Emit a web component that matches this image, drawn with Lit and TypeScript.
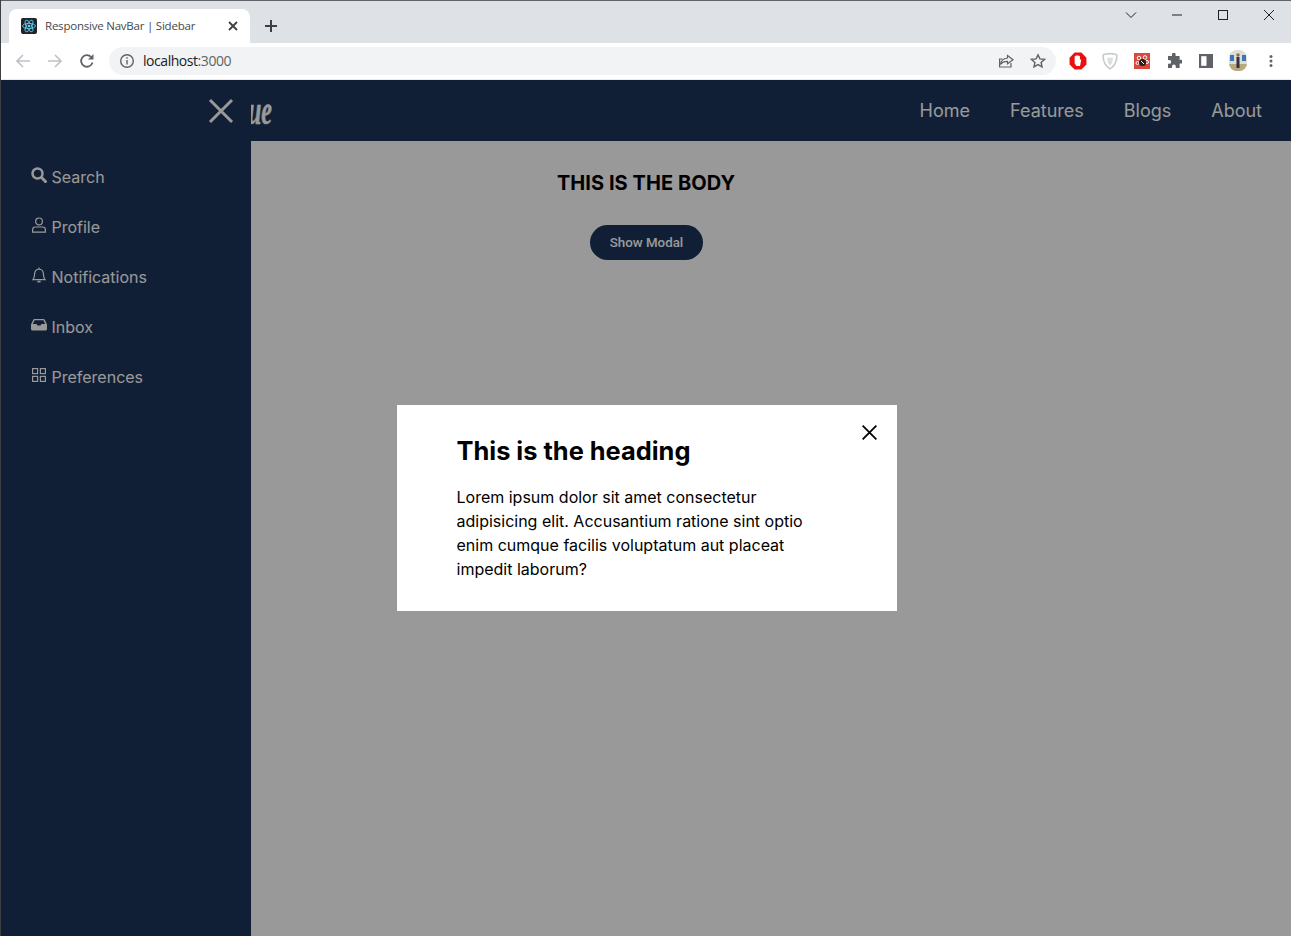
import { LitElement, css, html } from 'lit';
import { customElement } from 'lit/decorators.js';

const sideItems = [
  {
    label: 'Search',
    icon: html`<svg viewBox="0 0 16 16" fill="none" stroke="currentColor"><circle cx="6.500" cy="6.500" r="5" stroke-width="2.500"/><path d="M10.500 10.500l5 5" stroke-width="3"/></svg>`,
  },
  {
    label: 'Profile',
    icon: html`<svg viewBox="0 0 16 16" fill="none" stroke="currentColor" stroke-width="1.200"><circle cx="8" cy="4.400" r="3.400"/><path d="M1.600 15.200v-2.400c0-1.600 1.200-2.800 2.800-2.800h7.200c1.600 0 2.800 1.200 2.800 2.800v2.400z"/></svg>`,
  },
  {
    label: 'Notifications',
    icon: html`<svg viewBox="0 0 16 16" fill="none" stroke="currentColor" stroke-width="1.200"><path d="M8 .6v1.500M2 12.600c1.200-1.400 1.600-3 1.600-5.600C3.600 4 5.600 2.100 8 2.100S12.400 4 12.400 7c0 2.600.4 4.200 1.600 5.600z"/><path d="M6.400 14.600h3.200" stroke-width="1.600"/></svg>`,
  },
  {
    label: 'Inbox',
    icon: html`<svg viewBox="0 0 16 16" fill="currentColor"><path d="M3.600 2h8.800c.5 0 .9.200 1.200.6L16 7.400V12c0 .8-.7 1.500-1.500 1.500h-13C.7 13.500 0 12.800 0 12V7.400l2.400-4.800C2.700 2.200 3.100 2 3.600 2zm0 1.300L1.800 7h3.700l1 1.600h3l1-1.600h3.700l-1.800-3.700z"/></svg>`,
  },
  {
    label: 'Preferences',
    icon: html`<svg viewBox="0 0 16 16" fill="none" stroke="currentColor" stroke-width="1.200"><rect x="1.600" y="1.600" width="5" height="5"/><rect x="9.400" y="1.600" width="5" height="5"/><rect x="1.600" y="9.400" width="5" height="5"/><rect x="9.400" y="9.400" width="5" height="5"/></svg>`,
  },
];

const navLinks = ['Home', 'Features', 'Blogs', 'About'];

@customElement('app-root')
export class AppRoot extends LitElement {
  static get styles() {
    return css`
:host {
  display: block;
  width: 1291px;
  height: 936px;
  overflow: hidden;
  position: relative;
  box-sizing: border-box;
  border-left: 1px solid #3c4043;
  font-family: Inter, sans-serif;
  background: #fff;
}
button {
  font: inherit;
  border: 0;
  background: none;
  padding: 0;
  color: inherit;
}

/* browser chrome */
.tabstrip {
  height: 43px;
  box-sizing: border-box;
  border-top: 1px solid #5f6368;
  background: #dee1e6;
  display: flex;
  align-items: flex-end;
  padding-left: 8px;
}
.tab {
  width: 241px;
  height: 34px;
  box-sizing: border-box;
  background: #fff;
  border-radius: 8px 8px 0 0;
  display: flex;
  align-items: center;
  padding: 0 11px 0 12px;
  font-family: 'Open Sans', sans-serif;
  font-size: 11.5px;
  color: #45494d;
}
.favicon {
  width: 16px;
  height: 16px;
  margin-right: 8px;
  flex: none;
}
.tab-title {
  flex: 1;
  white-space: nowrap;
  letter-spacing: -0.22px;
  margin-top: -2px;
}
.tab-close {
  width: 12px;
  height: 12px;
  color: #3c4043;
}
.new-tab {
  width: 14px;
  height: 14px;
  margin: 0 0 10px 14px;
  color: #3c4043;
}
.winctl {
  margin-left: auto;
  align-self: flex-start;
  display: flex;
  margin-right: -1px;
}
.winctl span {
  width: 46px;
  height: 28px;
  display: flex;
  align-items: center;
  justify-content: center;
  color: #1f2124;
}
.winctl svg {
  width: 12px;
  height: 12px;
}
.toolbar {
  height: 37px;
  box-sizing: border-box;
  border-bottom: 1px solid #e8eaed;
  display: flex;
  align-items: center;
  padding: 0 4px 1px 6px;
  color: #5f6368;
}
.tool {
  width: 32px;
  height: 28px;
  flex: none;
  display: flex;
  align-items: center;
  justify-content: center;
}
.tool svg {
  width: 16px;
  height: 16px;
}
.tool svg.wide {
  width: 18px;
  height: 18px;
}
.tool svg.avatar {
  width: 18px;
  height: 21px;
}
.tool.dim {
  color: #bdc1c6;
}
.omnibox {
  flex: 1;
  height: 28px;
  margin: 0 6px;
  border-radius: 14px;
  background: #f1f3f4;
  display: flex;
  align-items: center;
  padding-left: 10px;
  font-family: 'Open Sans', sans-serif;
  font-size: 14px;
  letter-spacing: -0.45px;
  min-width: 0;
}
.omnibox .info {
  width: 16px;
  height: 16px;
  margin-right: 8px;
  flex: none;
}
.host-name {
  color: #202124;
}
.port {
  color: #5f6368;
}
.omni-end {
  margin-left: auto;
  margin-right: 2px;
  display: flex;
}
.sep {
  width: 1px;
  flex: none;
}

/* page */
.page {
  position: relative;
  height: 856px;
  background: #fff;
}
.navbar {
  height: 61px;
  box-sizing: border-box;
  background: #1c355a;
  display: flex;
  align-items: center;
  justify-content: space-between;
  padding: 0 29px 0 247px;
  color: #fff;
}
.logo {
  display: inline-block;
  font-family: 'Liberation Serif', serif;
  font-style: italic;
  font-weight: 700;
  font-size: 40px;
  line-height: 40px;
  -webkit-text-stroke: 0.5px #fff;
  transform: scaleX(0.6);
  transform-origin: left center;
  margin-top: 1px;
}
.links {
  display: flex;
  gap: 40px;
  font-size: 18px;
  margin-top: -1px;
}
.body {
  display: flex;
  flex-direction: column;
  align-items: center;
  padding-top: 30px;
}
.body h2 {
  margin: 0;
  font-size: 20px;
  line-height: 24px;
  font-weight: 700;
  letter-spacing: 0.06px;
  color: #000;
}
.open-btn {
  margin-top: 30px;
  height: 35px;
  padding: 0 20px 1px;
  border-radius: 18px;
  background: #1c355a;
  color: #fff;
  font-family: Roboto, sans-serif;
  font-size: 13.33px;
  font-weight: 500;
  margin-left: 1px;
}
.sidebar {
  position: absolute;
  left: 0;
  top: 0;
  bottom: 0;
  width: 250px;
  background: #1c355a;
  color: #fff;
  box-sizing: border-box;
  padding: 72px 0 0 30px;
}
.side-close {
  position: absolute;
  left: 207px;
  top: 18px;
  width: 26px;
  height: 26px;
}
.side-item {
  height: 50px;
  display: flex;
  align-items: center;
  gap: 4.5px;
  font-size: 16px;
}
.side-item svg {
  width: 16px;
  height: 16px;
  margin-top: -4px;
  flex: none;
}

/* modal */
.overlay {
  position: absolute;
  inset: 0;
  background: rgba(0, 0, 0, 0.4);
  display: flex;
  align-items: center;
  justify-content: center;
}
.modal {
  position: relative;
  width: 500px;
  height: 206px;
  box-sizing: border-box;
  background: #fff;
  padding: 30px 60px;
  margin-left: 1px;
  color: #000;
}
.modal h1 {
  margin: 0 0 19px;
  font-size: 25.4px;
  line-height: 31px;
  font-weight: 700;
}
.modal p {
  margin: 0;
  font-size: 16px;
  line-height: 24px;
}
.modal-close {
  position: absolute;
  top: 20px;
  right: 20px;
  width: 15px;
  height: 15px;
  display: block;
}
    `;
  }

  private renderToolbarIcons() {
    return html`
      <span class="tool"><svg class="wide" viewBox="0 0 16 16" fill="#e8110f"><path d="M5 .5h6L15.500 5v6L11 15.500H5L.5 11V5z"/><path fill="#fff" d="M5 7V4.200c0-.8 1-.8 1 0V3.400c0-.8 1.200-.8 1.200 0 0-.8 1.300-.8 1.300 0v.6c0-.8 1.200-.8 1.200 0v3c.4-.8 1.500-.4 1.100.4L9.800 12.500H6.500L5 10z"/></svg></span>
      <span class="tool"><svg class="wide" viewBox="0 0 16 16" fill="none" stroke="#c9cccf" stroke-width="1.500"><path d="M2 2.500c4-1.300 8-1.300 12 0 .4 5-1.400 9.500-6 12.500-4.600-3-6.400-7.500-6-12.500z"/><path d="M5.500 5h5l-.5 4.500L8 12l-2-2.500z" fill="#dcdee0" stroke="none"/></svg></span>
      <span class="tool"><svg viewBox="0 0 16 16" fill="none"><rect width="16" height="16" fill="#d9483b"/><circle cx="5" cy="5" r="1.800" stroke="#fff"/><circle cx="11" cy="4.500" r="1.800" stroke="#fff"/><circle cx="3.500" cy="10" r="1.500" stroke="#fff"/><circle cx="13" cy="9" r="1.500" stroke="#fff"/><circle cx="8.500" cy="9.500" r="3.500" fill="#2b1d1a"/><path d="M7 8l3 3" stroke="#fff"/></svg></span>
      <span class="tool"><svg viewBox="0 0 16 16" fill="currentColor"><path d="M6 1.500a1.800 1.800 0 0 1 3.600 0V3h4v3.800H15a1.900 1.900 0 0 1 0 3.800h-1.400V15h-3.800v-1.500a1.900 1.900 0 0 0-3.800 0V15H2v-4.200h1.300a1.900 1.900 0 0 0 0-3.800H2V3h4z"/></svg></span>
      <span class="tool"><svg viewBox="0 0 16 16" fill="none" stroke="currentColor" stroke-width="2.200"><rect x="2.100" y="2.100" width="11.800" height="11.800"/><path d="M11 2v12" stroke-width="5"/></svg></span>
      <span class="tool"><svg class="avatar" viewBox="0 0 18 21"><defs><clipPath id="av"><rect width="18" height="21" rx="8"/></clipPath></defs><g clip-path="url(#av)"><rect width="18" height="21" fill="#dcdcd8"/><rect y="14" width="18" height="7" fill="#b9a77e"/><rect x="1" y="5" width="4" height="6" fill="#3f74b5"/><rect x="13" y="5" width="4" height="6" fill="#3f74b5"/><rect x="7.500" y="7" width="3" height="11" fill="#30343a"/><circle cx="9" cy="5" r="1.700" fill="#8b6b55"/></g></svg></span>
      <span class="sep"></span>
      <span class="tool"><svg viewBox="0 0 16 16" fill="currentColor"><circle cx="8" cy="3.500" r="1.500"/><circle cx="8" cy="8" r="1.500"/><circle cx="8" cy="12.500" r="1.500"/></svg></span>
    `;
  }

  render() {
    return html`
      <div class="tabstrip">
        <div class="tab">
          <svg class="favicon" viewBox="0 0 16 16" fill="none" stroke="#61dafb" stroke-width="0.8">
            <rect width="16" height="16" rx="2" fill="#20232a" stroke="none"/>
            <ellipse cx="8" cy="8" rx="6.500" ry="2.600"/>
            <ellipse cx="8" cy="8" rx="6.500" ry="2.600" transform="rotate(60 8 8)"/>
            <ellipse cx="8" cy="8" rx="6.500" ry="2.600" transform="rotate(120 8 8)"/>
            <circle cx="8" cy="8" r="1.300" fill="#61dafb" stroke="none"/>
          </svg>
          <span class="tab-title">Responsive NavBar | Sidebar</span>
          <svg class="tab-close" viewBox="0 0 12 12" fill="none" stroke="currentColor" stroke-width="1.800"><path d="M2 2l8 8M10 2l-8 8"/></svg>
        </div>
        <svg class="new-tab" viewBox="0 0 14 14" fill="none" stroke="currentColor" stroke-width="2"><path d="M7 1v12M1 7h12"/></svg>
        <div class="winctl">
          <span><svg viewBox="0 0 12 12" fill="none" stroke="currentColor"><path d="M1 3.500l5 5 5-5"/></svg></span>
          <span><svg viewBox="0 0 12 12" fill="none" stroke="currentColor"><path d="M1 6h10"/></svg></span>
          <span><svg viewBox="0 0 12 12" fill="none" stroke="currentColor"><rect x="1.500" y="1.500" width="9" height="9"/></svg></span>
          <span><svg viewBox="0 0 12 12" fill="none" stroke="currentColor"><path d="M1 1l10 10M11 1L1 11"/></svg></span>
        </div>
      </div>
      <div class="toolbar">
        <span class="tool dim"><svg viewBox="0 0 16 16" fill="none" stroke="currentColor" stroke-width="1.600"><path d="M15 8H2M8 2L2 8l6 6"/></svg></span>
        <span class="tool dim"><svg viewBox="0 0 16 16" fill="none" stroke="currentColor" stroke-width="1.600"><path d="M1 8h13M8 2l6 6-6 6"/></svg></span>
        <span class="tool"><svg viewBox="0 0 16 16" fill="none" stroke="currentColor" stroke-width="1.800"><path d="M13.500 9.500A5.800 5.800 0 1 1 12.200 4"/><path d="M14.500 1v5.500H9" fill="currentColor" stroke="none"/></svg></span>
        <div class="omnibox">
          <svg class="info" viewBox="0 0 16 16" fill="none" stroke="currentColor" stroke-width="1.400"><circle cx="8" cy="8" r="6.300"/><path d="M8 7v4.500M8 4.300v1.500"/></svg>
          <span class="host-name">localhost<span class="port">:3000</span></span>
          <span class="omni-end">
            <span class="tool"><svg viewBox="0 0 16 16" fill="none" stroke="currentColor" stroke-width="1.200"><path d="M9.500 2.500L15 6.800l-5.500 4V8.300C6 8.300 3.800 9.300 2.500 11.500c.4-4 2.800-6 7-6.500z"/><path d="M13 10v4H1.600V6h3"/></svg></span>
            <span class="tool"><svg viewBox="0 0 16 16" fill="none" stroke="currentColor" stroke-width="1.400"><path d="M8 1.800l1.900 4.100 4.500.5-3.300 3 .9 4.500L8 11.600l-4 2.300.9-4.500-3.300-3 4.500-.5z"/></svg></span>
          </span>
        </div>
        ${this.renderToolbarIcons()}
      </div>
      <div class="page">
        <header class="navbar">
          <span class="logo">ue</span>
          <nav class="links">${navLinks.map((l) => html`<span>${l}</span>`)}</nav>
        </header>
        <main class="body">
          <h2>THIS IS THE BODY</h2>
          <button class="open-btn">Show Modal</button>
        </main>
        <aside class="sidebar">
          <svg class="side-close" viewBox="0 0 26 26" fill="none" stroke="currentColor" stroke-width="3"><path d="M2 2l22 22M24 2L2 24"/></svg>
          ${sideItems.map((i) => html`<div class="side-item">${i.icon}<span>${i.label}</span></div>`)}
        </aside>
        <div class="overlay">
          <div class="modal">
            <svg class="modal-close" viewBox="0 0 15 15" fill="none" stroke="currentColor" stroke-width="1.800"><path d="M.6.6l13.800 13.800M14.400.6L.6 14.400"/></svg>
            <h1>This is the heading</h1>
            <p>Lorem ipsum dolor sit amet consectetur adipisicing elit. Accusantium ratione sint optio enim cumque facilis voluptatum aut placeat impedit laborum?</p>
          </div>
        </div>
      </div>
    `;
  }
}
